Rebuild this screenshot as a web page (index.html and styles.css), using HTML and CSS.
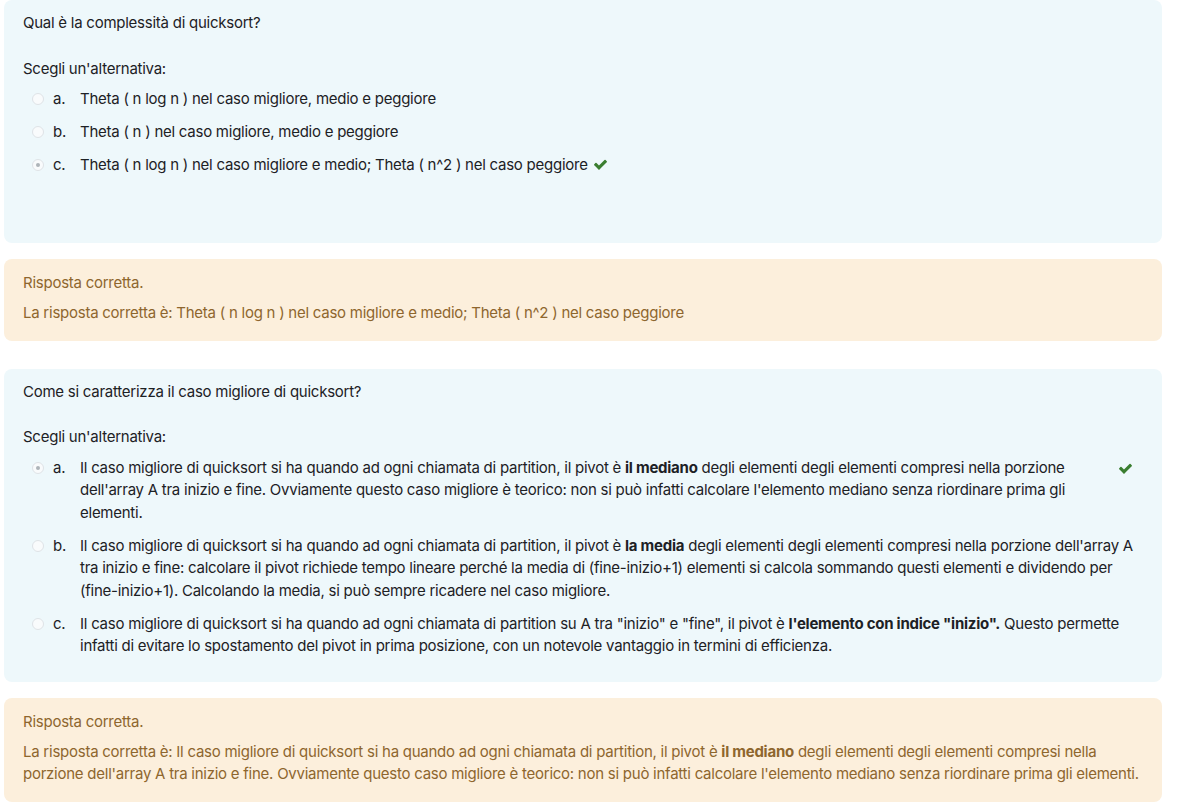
FILE: index.html
```html
<!DOCTYPE html>
<html lang="it">
<head>
<meta charset="utf-8">
<title>Quiz quicksort</title>
<link rel="stylesheet" href="styles.css">
</head>
<body>
<div class="page">

  <section class="formulation formulation--tall">
    <div class="qtext">Qual è la complessità di quicksort?</div>
    <div class="prompt">Scegli un'alternativa:</div>
    <div class="answers">
      <div class="answer">
        <span class="radio"></span>
        <span class="num">a.</span>
        <div class="atext">Theta ( n log n ) nel caso migliore, medio e peggiore</div>
      </div>
      <div class="answer">
        <span class="radio"></span>
        <span class="num">b.</span>
        <div class="atext">Theta ( n ) nel caso migliore, medio e peggiore</div>
      </div>
      <div class="answer">
        <span class="radio radio--checked"></span>
        <span class="num">c.</span>
        <div class="atext">Theta ( n log n ) nel caso migliore e medio; Theta ( n^2 ) nel caso peggiore<svg class="check check--inline" viewBox="0 0 1792 1792" aria-hidden="true"><path d="M1671 566q0 40-28 68l-724 724-136 136q-28 28-68 28t-68-28l-136-136-362-362q-28-28-28-68t28-68l136-136q28-28 68-28t68 28l294 295 656-657q28-28 68-28t68 28l136 136q28 28 28 68z"/></svg></div>
      </div>
    </div>
  </section>

  <section class="outcome">
    <p class="fb-title">Risposta corretta.</p>
    <p class="fb-text">La risposta corretta è: Theta ( n log n ) nel caso migliore e medio; Theta ( n^2 ) nel caso peggiore</p>
  </section>

  <section class="formulation">
    <div class="qtext">Come si caratterizza il caso migliore di quicksort?</div>
    <div class="prompt">Scegli un'alternativa:</div>
    <div class="answers">
      <div class="answer">
        <span class="radio radio--checked"></span>
        <span class="num">a.</span>
        <div class="atext">Il caso migliore di quicksort si ha quando ad ogni chiamata di partition, il pivot è <strong>il mediano</strong> degli elementi degli elementi compresi nella porzione dell'array A tra inizio e fine. Ovviamente questo caso migliore è teorico: non si può infatti calcolare l'elemento mediano senza riordinare prima gli elementi.</div>
        <svg class="check check--side" viewBox="0 0 1792 1792" aria-hidden="true"><path d="M1671 566q0 40-28 68l-724 724-136 136q-28 28-68 28t-68-28l-136-136-362-362q-28-28-28-68t28-68l136-136q28-28 68-28t68 28l294 295 656-657q28-28 68-28t68 28l136 136q28 28 28 68z"/></svg>
      </div>
      <div class="answer">
        <span class="radio"></span>
        <span class="num">b.</span>
        <div class="atext">Il caso migliore di quicksort si ha quando ad ogni chiamata di partition, il pivot è <strong>la media</strong> degli elementi degli elementi compresi nella porzione dell'array A tra inizio e fine: calcolare il pivot richiede tempo lineare perché la media di (fine-inizio+1) elementi si calcola sommando questi elementi e dividendo per (fine-inizio+1). Calcolando la media, si può sempre ricadere nel caso migliore.</div>
      </div>
      <div class="answer">
        <span class="radio"></span>
        <span class="num">c.</span>
        <div class="atext">Il caso migliore di quicksort si ha quando ad ogni chiamata di partition su A tra "inizio" e "fine", il pivot è <strong>l'elemento con indice "inizio".</strong> Questo permette infatti di evitare lo spostamento del pivot in prima posizione, con un notevole vantaggio in termini di efficienza.</div>
      </div>
    </div>
  </section>

  <section class="outcome">
    <p class="fb-title">Risposta corretta.</p>
    <p class="fb-text">La risposta corretta è: Il caso migliore di quicksort si ha quando ad ogni chiamata di partition, il pivot è <strong>il mediano</strong> degli elementi degli elementi compresi nella porzione dell'array A tra inizio e fine. Ovviamente questo caso migliore è teorico: non si può infatti calcolare l'elemento mediano senza riordinare prima gli elementi.</p>
  </section>

</div>
</body>
</html>
```

FILE: styles.css
```css
html, body {
  margin: 0;
  padding: 0;
  background: #ffffff;
}

body {
  font-family: Inter, Roboto, "Liberation Sans", sans-serif;
  font-size: 15px;
  line-height: 22.5px;
  letter-spacing: -0.25px;
  color: #1d2125;
}

.page {
  display: flex;
  flex-direction: column;
  padding: 0 17px 0 4px;
}

.formulation {
  background: #eef8fb;
  border-radius: 8px;
  padding: 12px 19px 19px 19px;
}

.formulation--tall {
  padding-bottom: 61px;
}

.qtext {
  margin-bottom: 23px;
}

.prompt {
  margin-bottom: 3px;
}

.answers {
  display: flex;
  flex-direction: column;
}

.answer {
  display: flex;
  align-items: flex-start;
  padding: 5px 0 5.5px 0;
}

.radio {
  flex: none;
  box-sizing: border-box;
  width: 12px;
  height: 12px;
  margin: 5px 9px 0 9px;
  border-radius: 50%;
  border: 1px solid #dfe3e7;
  background: #f9fbfc;
  position: relative;
}

.radio--checked::after {
  content: "";
  position: absolute;
  left: 50%;
  top: 50%;
  width: 4px;
  height: 4px;
  margin: -2px 0 0 -2px;
  border-radius: 50%;
  background: #aeb4b9;
}

.num {
  flex: none;
  width: 27px;
}

.atext {
  flex: 1;
  min-width: 0;
}

.atext strong,
.fb-text strong {
  font-weight: 700;
}

.check {
  fill: #3a7e30;
  width: 15px;
  height: 15px;
}

.check--inline {
  display: inline-block;
  vertical-align: -2px;
  margin-left: 5px;
}

.check--side {
  flex: none;
  margin: 4px 10px 0 8px;
}

.outcome {
  background: #fcefdc;
  color: #8e662e;
  border-radius: 8px;
  padding: 13px 19px 16.5px 19px;
  margin-top: 16px;
  margin-bottom: 28px;
}

.fb-title,
.fb-text {
  margin: 0;
}

.fb-title {
  margin-bottom: 7px;
}
```
